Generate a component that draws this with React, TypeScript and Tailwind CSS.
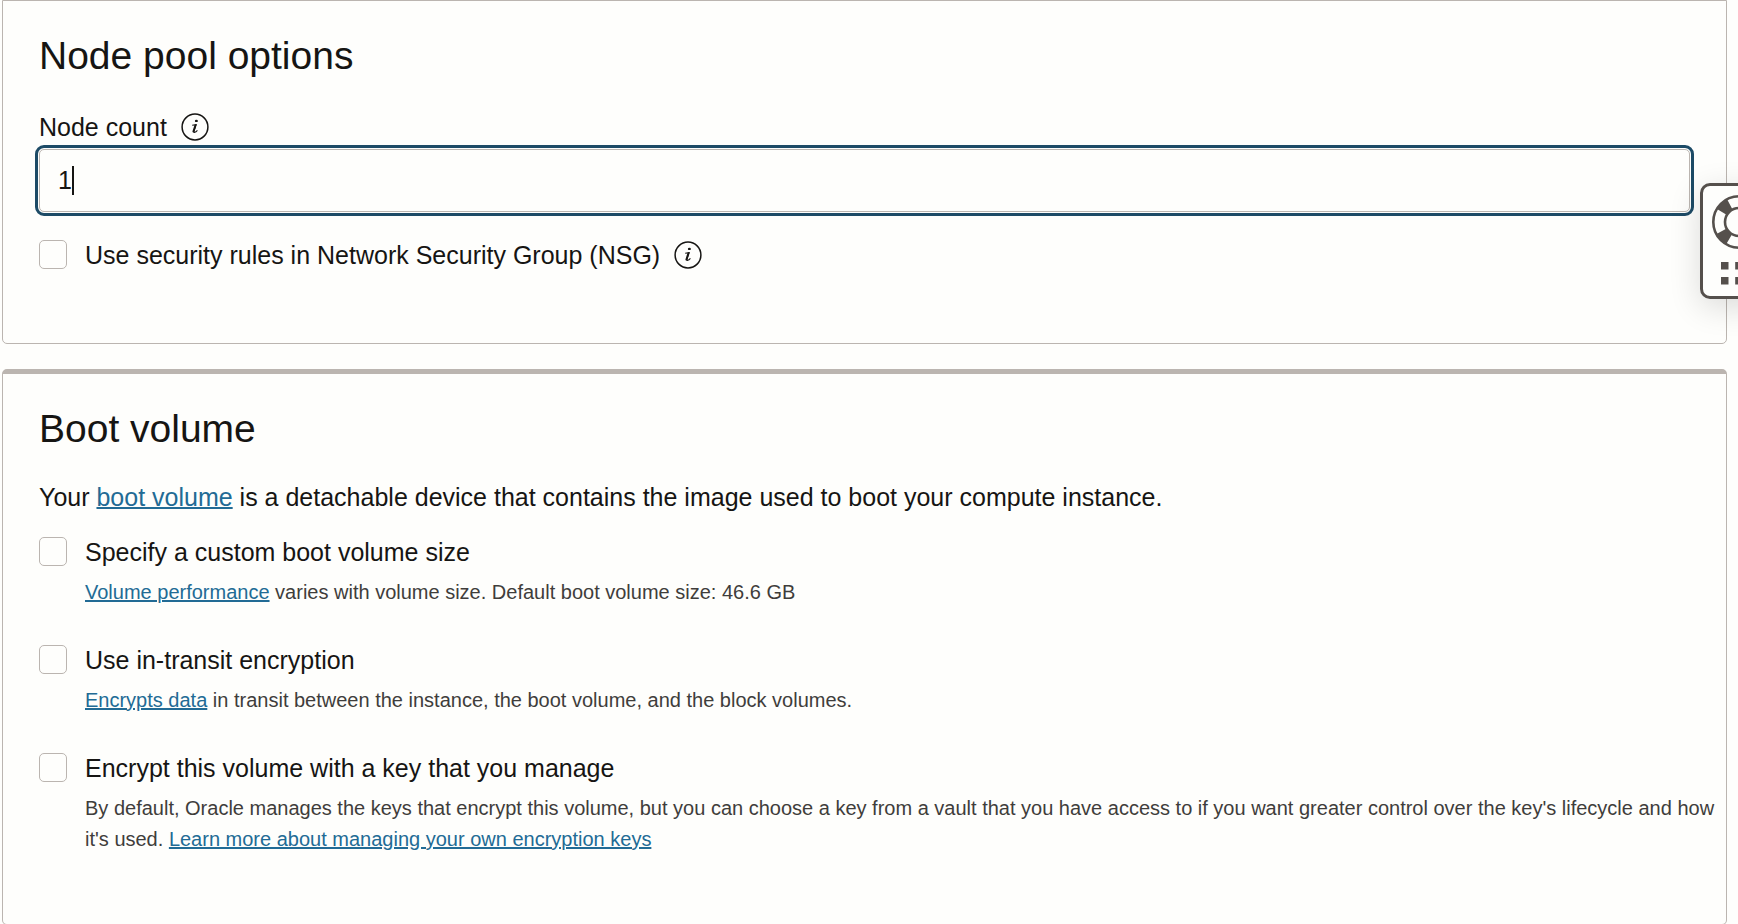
import { useEffect, useRef, useState, type ReactNode } from "react";

function InfoIcon() {
  return (
    <svg viewBox="0 0 28 28" className="size-7 shrink-0" fill="none" aria-hidden="true">
      <circle cx="14" cy="14" r="12.9" stroke="#161513" strokeWidth="1.5" />
      <ellipse cx="15.4" cy="7.9" rx="1.5" ry="1.2" fill="#161513" />
      <path d="M11.2 12.3 L15.2 11.6 L12.9 18.4 C12.7 20 14.4 19.6 16.4 17.4" stroke="#161513" strokeWidth="1.1" />
      <path d="M14.4 12.2 L12.4 18.6" stroke="#161513" strokeWidth="1.9" strokeLinecap="round" />
    </svg>
  );
}

function InfoButton({ label }: { label: string }) {
  return (
    <button type="button" aria-label={label} className="rounded-full">
      <InfoIcon />
    </button>
  );
}

function Link({ children }: { children: ReactNode }) {
  return (
    <a href="#" className="text-[#226b95] underline underline-offset-1">
      {children}
    </a>
  );
}

type OptionProps = { id: string; label: string; info?: string; hint?: ReactNode };

function Option({ id, label, info, hint }: OptionProps) {
  return (
    <div className="flex items-start gap-[18px]">
      <input
        id={id}
        type="checkbox"
        className="mt-px h-[29px] w-7 shrink-0 appearance-none rounded-[5px] border border-[#bbb5b0] bg-[#fefefc] checked:bg-[#1d4b66]"
      />
      <div className="flex min-w-0 flex-col gap-[9px]">
        <div className="flex items-center gap-[14px]">
          <label htmlFor={id}>{label}</label>
          {info && <InfoButton label={info} />}
        </div>
        {hint && <p className="text-[20px] leading-[31px] text-[#3f3d3b]">{hint}</p>}
      </div>
    </div>
  );
}

function NodeCountField() {
  const [value, setValue] = useState("1");
  const ref = useRef<HTMLInputElement>(null);

  useEffect(() => {
    ref.current?.focus();
  }, []);

  return (
    <div className="relative mt-[6px] mr-9 mb-[27px]">
      <input
        ref={ref}
        id="node-count"
        type="text"
        inputMode="numeric"
        value={value}
        onChange={(e) => setValue(e.target.value)}
        className="peer block h-[63px] w-full rounded-[5px] border border-[#bbb5b0] bg-[#fefefc] px-[18px] caret-transparent outline-[3px] outline-offset-1 outline-[#1d4b66]"
      />
      <span
        aria-hidden="true"
        className="pointer-events-none absolute inset-y-0 my-auto hidden h-[29px] w-[2px] bg-[#161513] peer-focus:block"
        style={{ left: `calc(19px + ${value.length}ch)` }}
      />
    </div>
  );
}

function HelpWidget() {
  return (
    <button
      type="button"
      aria-label="Help"
      className="fixed top-[183px] -right-10 flex h-[116px] w-[78px] flex-col items-center gap-[13px] rounded-[10px] border-[3px] border-[#55504c] bg-[#fefefc] pt-[9px] shadow-[0_8px_32px_rgba(0,0,0,0.14)]"
    >
      <svg viewBox="0 0 54 54" className="size-[54px]" fill="none" stroke="#55504c" aria-hidden="true">
        <circle cx="27" cy="27" r="20" strokeWidth="12" strokeDasharray="11 20.416" strokeDashoffset="-10.208" />
        <circle cx="27" cy="27" r="25.7" strokeWidth="2.6" />
        <circle cx="27" cy="27" r="14" strokeWidth="2.6" />
      </svg>
      <svg viewBox="0 0 36 23" className="h-[23px] w-9" fill="#55504c" aria-hidden="true">
        <path d="M0 0h7.5v7.5H0zM14.2 0h7.5v7.5h-7.5zM28.5 0h7.5v7.5h-7.5zM0 15h7.5v7.5H0zM14.2 15h7.5v7.5h-7.5zM28.5 15h7.5v7.5h-7.5z" />
      </svg>
    </button>
  );
}

export default function App() {
  return (
    <main className="min-h-screen overflow-x-hidden bg-[#fefefc] pr-[11px] pl-[2px] font-['Liberation_Sans',Arial,sans-serif] text-[25px] leading-8 text-[#161513]">
      <section className="rounded-b-[5px] border border-[#bbb5b0] pt-[31px] pb-[72px] pl-9">
        <h2 className="text-[39px] leading-[48px]">Node pool options</h2>
        <div className="mt-[31px] flex items-center gap-[14px]">
          <label htmlFor="node-count">Node count</label>
          <InfoButton label="About node count" />
        </div>
        <NodeCountField />
        <Option id="nsg" label="Use security rules in Network Security Group (NSG)" info="About network security groups" />
      </section>

      <section className="mt-[25px] rounded-[5px] border border-t-[5px] border-[#bbb5b0] pt-[31px] pb-[69px] pl-9">
        <h2 className="text-[39px] leading-[48px]">Boot volume</h2>
        <p className="mt-7 mb-[23px]">
          Your <Link>boot volume</Link> is a detachable device that contains the image used to boot your compute instance.
        </p>
        <div className="flex flex-col gap-9">
          <Option
            id="custom-size"
            label="Specify a custom boot volume size"
            hint={
              <>
                <Link>Volume performance</Link> varies with volume size. Default boot volume size: 46.6 GB
              </>
            }
          />
          <Option
            id="in-transit"
            label="Use in-transit encryption"
            hint={
              <>
                <Link>Encrypts data</Link> in transit between the instance, the boot volume, and the block volumes.
              </>
            }
          />
          <Option
            id="managed-key"
            label="Encrypt this volume with a key that you manage"
            hint={
              <>
                By default, Oracle manages the keys that encrypt this volume, but you can choose a key from a vault that
                you have access to if you want greater control over the key's lifecycle and how it's used.{" "}
                <Link>Learn more about managing your own encryption keys</Link>
              </>
            }
          />
        </div>
      </section>
      <HelpWidget />
    </main>
  );
}
